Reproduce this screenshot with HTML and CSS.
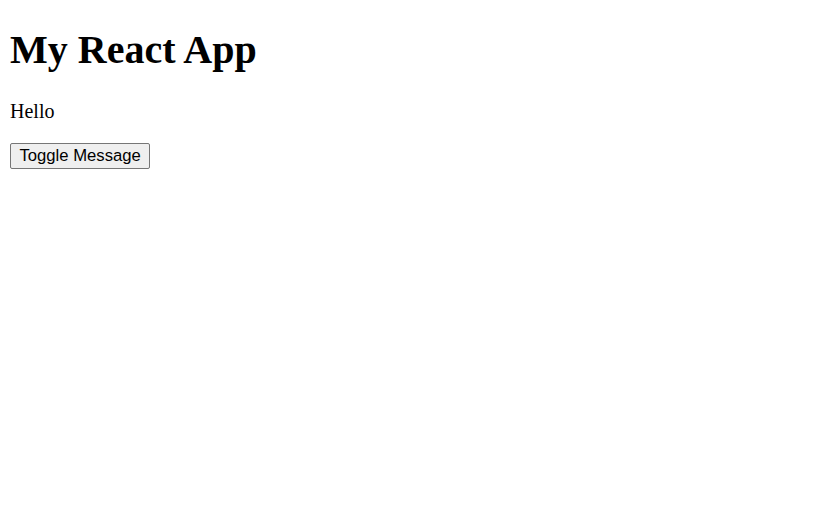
FILE: index.html
```html
<!DOCTYPE html>
<html>
<head>
<meta charset="utf-8">
<title>My React App</title>
<link rel="stylesheet" href="styles.css">
</head>
<body class="page">
<div id="root">
<h1 class="title">My React App</h1>
<p class="message">Hello</p>
<button class="toggle">Toggle Message</button>
</div>
</body>
</html>
```
FILE: styles.css
```css
.page {
  margin: 10px;
  font-family: "Liberation Serif", "Times New Roman", serif;
  font-size: 20px;
  background: #fff;
  color: #000;
}
.title {
  font-size: 40px;
  font-weight: bold;
  margin: 16px 0 27px;
}
.message {
  font-size: 20px;
  margin: 20px 0;
}
.toggle {
  font-family: "Liberation Sans", Arial, sans-serif;
  font-size: 16.67px;
  padding: 2px 8.5px;
  border: 1px solid #767676;
  border-radius: 2px;
  background: #efefef;
  color: #000;
}
```
